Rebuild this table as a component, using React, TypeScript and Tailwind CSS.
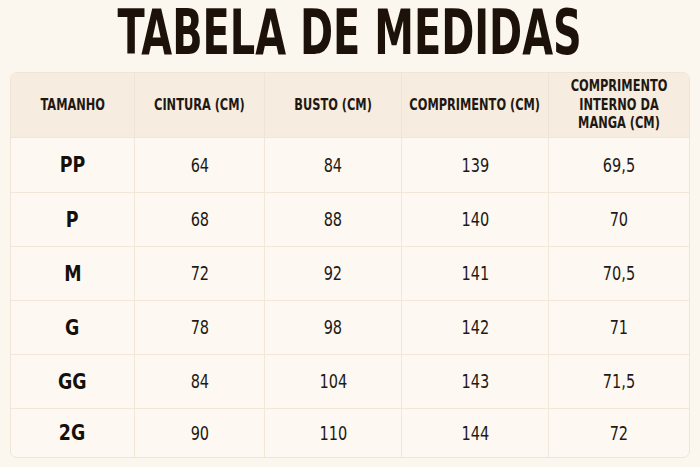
import React from 'react';

const headers = ['TAMANHO', 'CINTURA (CM)', 'BUSTO (CM)', 'COMPRIMENTO (CM)', 'COMPRIMENTO INTERNO DA MANGA (CM)'];

const rows: string[][] = [
  ['PP', '64', '84', '139', '69,5'],
  ['P', '68', '88', '140', '70'],
  ['M', '72', '92', '141', '70,5'],
  ['G', '78', '98', '142', '71'],
  ['GG', '84', '104', '143', '71,5'],
  ['2G', '90', '110', '144', '72'],
];

const font = { fontFamily: '"DejaVu Sans Condensed", "DejaVu Sans", "Liberation Sans", sans-serif' };

const App: React.FC = () => {
  return (
    <div className="w-[700px] h-[467px] bg-[#fcf7ee] overflow-hidden" style={font}>
      <div className="h-[72px] flex items-center justify-center">
        <h1 className="inline-block scale-x-[0.715] font-stretch-condensed font-bold text-[62px] leading-none text-[#1c120a] pb-[6px] whitespace-nowrap">
          TABELA DE MEDIDAS
        </h1>
      </div>

      <div className="mx-[10px] w-[680px] border border-[#efe4d5] rounded-[7px] overflow-hidden bg-[#fdf9f2]">
        <div className="grid grid-cols-[124px_130px_137px_147px_140px] h-[65px] bg-[#f6ece0] border-b border-[#efe4d5]">
          {headers.map((h, i) => (
            <div
              key={h}
              className={`flex items-center justify-center text-center ${i < headers.length - 1 ? 'border-r border-[#efe4d5]' : ''}`}
            >
              <span
                className={`inline-block font-stretch-condensed font-bold text-[16px] leading-[18.5px] text-[#1f1812] scale-x-[0.79] ${i === 4 ? 'w-[124px] shrink-0' : 'whitespace-nowrap'}`}
              >
                {h}
              </span>
            </div>
          ))}
        </div>

        {rows.map((r, ri) => (
          <div
            key={r[0]}
            className={`grid grid-cols-[124px_130px_137px_147px_140px] ${ri === 0 ? 'h-[55px]' : ri === rows.length - 1 ? 'h-[48px]' : 'h-[54px]'} ${ri < rows.length - 1 ? 'border-b border-[#f1e8da]' : ''}`}
          >
            {r.map((c, ci) => (
              <div
                key={ci}
                className={`flex items-center justify-center ${ci < r.length - 1 ? 'border-r border-[#f1e8da]' : ''}`}
              >
                {ci === 0 ? (
                  <span className="inline-block font-stretch-condensed font-bold text-[22px] leading-none text-[#15100c] scale-x-[0.88]">
                    {c}
                  </span>
                ) : (
                  <span className="inline-block font-stretch-condensed text-[19px] leading-none text-[#1f1a16] scale-x-[0.85]">
                    {c}
                  </span>
                )}
              </div>
            ))}
          </div>
        ))}
      </div>
    </div>
  );
};

export default App;
